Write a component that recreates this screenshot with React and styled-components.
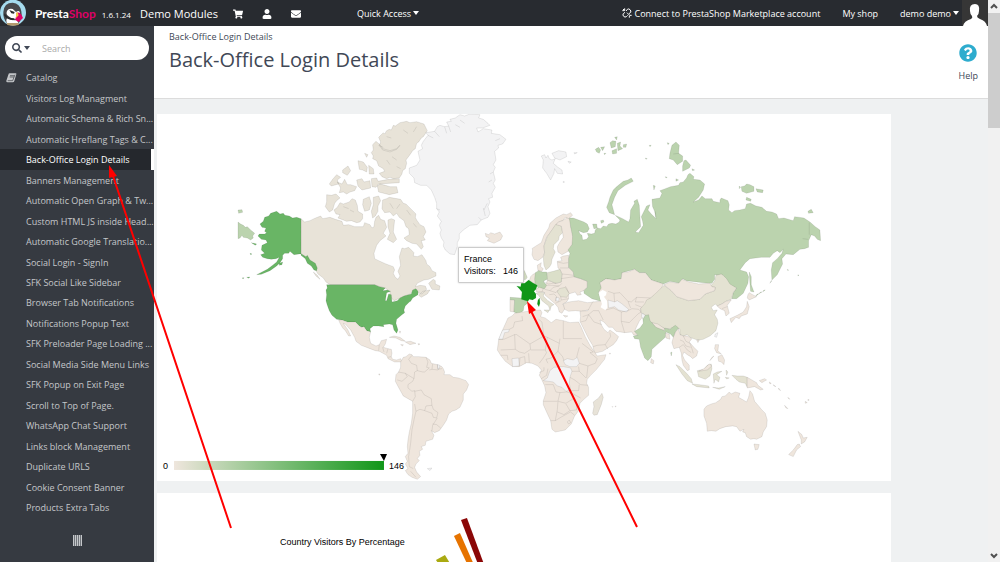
import styled, { createGlobalStyle } from "styled-components";
import {
  FaEnvelope,
  FaQuestionCircle,
  FaSearch,
  FaShoppingCart,
  FaUser,
} from "react-icons/fa";

const GlobalStyle = createGlobalStyle`
  * {
    box-sizing: border-box;
  }
  body {
    margin: 0;
    font-family: "Open Sans", sans-serif;
    font-size: 9px;
    color: #414856;
  }
  a {
    color: inherit;
    text-decoration: none;
  }
`;

const Window = styled.div`
  position: relative;
  display: flex;
  height: 100vh;
  overflow: hidden;
`;
const Page = styled.div`
  flex: 1;
  min-width: 0;
  display: flex;
  flex-direction: column;
`;

/* top bar */
const TopBar = styled.header`
  flex: none;
  display: flex;
  align-items: center;
  height: 26px;
  background: #282b30;
  color: #fff;
`;
const Brand = styled.a`
  display: flex;
  align-items: center;
  width: 140px;
  height: 26px;
`;
const BrandName = styled.span`
  margin-left: 8px;
  font-family: Lato, sans-serif;
  font-size: 12px;
  font-weight: 700;
`;
const Pink = styled.span`
  color: #df0067;
`;
const Version = styled.span`
  margin-left: 6px;
  padding-top: 3px;
  font-size: 8px;
  line-height: 11px;
`;
const ShopName = styled.a`
  width: 93px;
  font-size: 11px;
`;
const IconButton = styled.button`
  display: flex;
  width: 29px;
  padding: 2px 0 0;
  border: 0;
  background: none;
  color: #fff;
  font-size: 10px;
`;
const MenuButton = styled.button`
  display: flex;
  align-items: center;
  gap: 2px;
  padding: 0;
  border: 0;
  background: none;
  color: #fff;
  font: 9px "Open Sans", sans-serif;
`;
const Quick = styled.div`
  flex: 1;
  padding-left: 37px;
`;
const Account = styled.div`
  display: flex;
  align-items: center;
  gap: 22px;
`;
const TopLink = styled.a`
  display: flex;
  align-items: center;
  gap: 2px;
`;
const Avatar = styled.svg`
  width: 26px;
  height: 26px;
  margin-left: 3px;
  background: #363636;
`;

/* sidebar */
const Body = styled.div`
  flex: 1;
  min-height: 0;
  display: flex;
`;
const Sidebar = styled.nav`
  flex: none;
  width: 154px;
  padding-top: 10px;
  background: #363a41;
  color: #c5c7ca;
`;
const SearchBox = styled.form`
  display: flex;
  align-items: center;
  height: 24px;
  margin: 0 5px;
  padding-left: 7px;
  border-radius: 12px;
  background: #fff;
  color: #414856;
`;
const SearchType = styled.button`
  display: flex;
  align-items: center;
  gap: 2px;
  width: 30px;
  padding: 0;
  border: 0;
  background: none;
  color: #414856;
  font-size: 10px;
`;
const SearchInput = styled.input`
  width: 96px;
  padding: 0;
  border: 0;
  outline: 0;
  background: none;
  font: 9px "Open Sans", sans-serif;
  &::placeholder {
    color: #aaa;
    opacity: 1;
  }
`;
const Section = styled.a`
  display: flex;
  align-items: center;
  gap: 9px;
  height: 21px;
  margin-top: 7px;
  padding-left: 6px;
`;
const Menu = styled.ul`
  display: grid;
  grid-template-columns: 100%;
  grid-auto-rows: 1fr;
  height: 430px;
  margin: 0;
  padding: 0;
  list-style: none;
`;
const MenuItem = styled.li`
  display: flex;
  align-items: center;
  padding-left: 26px;
  ${(props) =>
    props.$active &&
    `
    background: #25282d;
    border-right: 3px solid #fff;
    color: #fff;
  `}
`;
const MenuLink = styled.a`
  white-space: nowrap;
`;
const Collapse = styled.button`
  display: block;
  width: 9px;
  height: 11px;
  margin: 17px auto 0;
  padding: 0;
  border: 0;
  background: repeating-linear-gradient(90deg, #c5c7ca 0 1px, #6f7379 1px 2px);
`;

/* content */
const Main = styled.main`
  flex: 1;
  min-width: 0;
  background: #eff1f2;
  overflow: hidden;
`;
const PageHead = styled.div`
  display: flex;
  justify-content: space-between;
  height: 73px;
  padding: 4px 10px 0 15px;
  border-bottom: 1px solid #dcdcdc;
  background: #fff;
`;
const Crumb = styled.div`
  line-height: 14px;
`;
const Title = styled.h1`
  margin: 2px 0 0;
  font-size: 20px;
  line-height: 28px;
  font-weight: 400;
`;
const Help = styled.a`
  display: flex;
  flex-direction: column;
  align-items: center;
  gap: 7px;
  padding-top: 14px;
  svg {
    width: 18px;
    height: 18px;
    color: #2eacce;
  }
`;
const Card = styled.section`
  position: relative;
  width: 88%;
  margin: 15px 0 0 3px;
  background: #fff;
  & + & {
    margin-top: 12px;
  }
`;
const Chart = styled.svg`
  display: block;
  width: 100%;
  font: 9px "Liberation Sans", Arial, sans-serif;
`;
const Tip = styled.div`
  position: absolute;
  left: 301px;
  top: 133px;
  width: 66px;
  padding: 5px;
  border: 1px solid #ccc;
  border-radius: 1px;
  background: #fff;
  box-shadow: 0 0 2px rgba(0, 0, 0, 0.2);
  color: #000;
  font: 9px/12px "Liberation Sans", Arial, sans-serif;
`;
const TipRow = styled.div`
  display: flex;
  justify-content: space-between;
`;
const Rail = styled.div`
  flex: none;
  display: flex;
  flex-direction: column;
  align-items: center;
  justify-content: space-between;
  width: 12px;
  background: #f1f1f1;
`;
const RailTop = styled.div`
  width: 100%;
`;
const Thumb = styled.div`
  height: 115px;
  background: #cdcdcd;
`;
const RailArrow = styled.svg`
  display: block;
  width: 12px;
  height: 13px;
`;
const Arrows = styled.svg`
  position: absolute;
  inset: 0;
  width: 100%;
  height: 100%;
  pointer-events: none;
`;

const items = [
  "Visitors Log Managment",
  "Automatic Schema & Rich Sn...",
  "Automatic Hreflang Tags & C...",
  "Back-Office Login Details",
  "Banners Management",
  "Automatic Open Graph & Tw...",
  "Custom HTML JS inside Head...",
  "Automatic Google Translatio...",
  "Social Login - SignIn",
  "SFK Social Like Sidebar",
  "Browser Tab Notifications",
  "Notifications Popup Text",
  "SFK Preloader Page Loading ...",
  "Social Media Side Menu Links",
  "SFK Popup on Exit Page",
  "Scroll to Top of Page.",
  "WhatsApp Chat Support",
  "Links block Management",
  "Duplicate URLS",
  "Cookie Consent Banner",
  "Products Extra Tabs",
];

const PINK = "#efe6dd";
const SAND = "#e8e3d8";
const OLIVE = "#e4e2d2";
const GREY = "#f3f3f4";
const PALE = "#bbd3ae";
const MID = "#69b565";
const DARK = "#109618";

// each region: origin on the map plus shapes drawn at three units per pixel
const regions = [
  {
    at: [230, 110],
    shapes: [
      [PALE, "M24 336L32 342 40 346 46 352 52 350 62 360 74 370 68 378 70 384 62 390 52 384 40 382 36 376 30 384 24 386ZM24 300L36 299 38 307 26 310Z"],
      [SAND, "M446 82L460 68 464 72 470 62 478 58 484 60 490 46 496 48 510 38 530 34 540 38 560 35 582 42 592 62 580 80 574 84 566 96 560 100 556 116 548 122 540 134 528 150 530 160 526 176 518 182 516 192 508 204 490 206 480 202 470 206 456 200 448 190 464 184 460 176 446 168 440 152 428 146 430 138 424 128 430 120 428 104 438 94 450 104 458 116 480 122 500 116 510 106 500 118 480 126 458 120 448 106 452 96Z"],
      [SAND, "M442 228L450 222 466 226 480 230 500 230 504 248 478 254 446 246ZM424 206L440 204 444 214 476 208 508 206 508 218 446 222 438 232 426 230Z"],
      [SAND, "M298 222L308 208 320 194 332 202 322 210 326 222 304 228ZM338 180L354 168 362 182 352 196 338 188ZM322 216L336 222 344 208 352 224 362 224 380 230 374 242 360 246 350 252 340 246 328 248 332 234ZM384 152L400 156 412 172 410 186 398 180 388 178ZM416 166L430 176 432 192 418 192ZM380 210L396 206 402 216 420 212 422 234 396 240 384 228ZM404 130L414 134 410 142Z"],
      [SAND, "M290 254L304 256 318 252 330 264 320 272 314 280 308 300 298 306 286 290 290 276ZM312 300L322 292 330 278 340 282 358 276 366 266 376 270 382 286 384 304 398 312 398 326 390 336 380 338 364 332 350 334 324 324 330 314 318 312ZM400 268L418 260 424 280 418 300 404 304 398 284ZM430 262L446 258 452 272 444 288 444 304 436 318 428 324 424 304 430 284Z"],
      [SAND, "M458 270L470 266 478 262 512 268 520 280 528 282 536 290 548 302 558 312 556 322 560 330 570 344 582 350 588 366 580 380 586 390 574 392 580 410 574 418 560 402 546 400 530 392 522 384 538 374 536 356 528 350 522 332 508 322 500 310 490 318 480 306 464 308 456 296ZM474 330L484 326 494 330 490 366 500 388 490 398 472 388 480 370 474 350Z"],
      [SAND, "M213 326L224 336 240 332 252 326 262 322 272 318 278 326 300 322 316 328 336 334 340 346 356 344 374 350 400 350 404 338 420 344 426 354 432 350 434 334 438 322 446 316 452 328 464 332 470 352 460 370 468 378 450 392 440 406 432 430 434 446 446 452 468 462 490 470 494 480 490 490 496 502 504 508 510 498 504 484 512 466 508 440 516 414 524 416 536 412 552 428 550 438 562 440 576 434 588 452 590 462 600 470 606 482 618 488 618 498 596 508 582 510 562 520 556 530 570 526 586 528 590 538 576 552 562 548 556 536 540 552 506 566 492 572 480 560 480 546 466 534 448 530 432 524 300 524 288 516 280 504 264 492 258 482 240 454 213 430ZM596 520L610 508 616 512 616 522 630 528 628 540 606 538ZM566 556L578 544 600 540 592 552 574 562ZM250 486L262 496 270 508 258 498Z"],
      [MID, "M213 326L200 322 188 324 178 318 165 316 160 310 150 312 140 304 122 310 116 318 104 322 100 334 90 342 96 352 108 354 104 364 110 368 104 372 88 372 84 378 94 388 108 390 112 398 96 406 94 420 104 430 92 434 98 442 112 446 124 448 138 446 148 442 140 456 130 464 112 478 96 486 80 494 94 493 120 482 140 468 150 458 158 446 158 436 164 430 176 430 180 424 192 434 213 431 228 440 232 436 240 450 256 460 262 474 260 482 252 480 244 468 232 460 226 446 213 436ZM148 460L158 456 156 464 148 466ZM64 398L80 402 76 406ZM60 430L66 432 62 434ZM36 504L42 503 40 506ZM50 502L60 501 56 505Z"],
    ],
    lines: "M520 60L534 70M560 50L550 66M470 80L484 84M446 106L460 112M486 140L500 150M470 150L480 164M500 170L512 176M340 290L356 296M360 300L372 306M480 280L490 296M510 282L500 296M530 300L542 316M550 340L560 352",
  },
  {
    at: [320, 280],
    shapes: [
      [MID, "M20 14L164 14 178 20 196 24 188 32 202 30 212 34 200 38 196 62 200 62 206 42 214 44 216 66 232 62 240 54 252 48 274 42 278 30 288 26 294 34 294 44 278 54 272 64 268 66 256 78 252 90 254 98 244 106 230 118 228 130 234 150 230 160 222 150 218 134 208 132 190 134 192 140 176 138 160 138 150 146 152 156 140 152 132 140 124 142 118 138 106 126 82 126 66 120 50 118 36 106 28 92 22 76 18 62 20 44 18 30 22 24Z"],
      [PINK, "M56 120L66 120 82 126 106 126 118 138 124 142 132 140 140 152 152 156 148 172 152 190 168 198 178 194 184 182 200 178 196 192 190 202 204 206 214 208 216 220 214 230 218 238 230 240 242 236 246 246 236 246 224 246 204 236 200 226 178 214 166 212 150 206 124 196 108 184 104 172 92 150 76 132 70 130 84 150 92 168 86 168 76 152 68 144 60 130Z"],
      [PINK, "M208 172L222 168 240 172 256 184 244 182 228 174ZM256 186L272 184 288 190 270 194ZM242 194L250 194 248 198ZM294 191L300 192 296 195ZM238 154L240 160 242 154Z"],
      [PINK, "M242 246L250 232 258 230 268 222 276 224 280 230 296 230 318 232 330 240 334 250 352 254 366 260 370 266 374 276 372 284 390 284 400 292 416 294 438 302 446 314 440 330 430 342 430 360 420 382 408 390 396 394 386 402 380 420 370 436 358 452 344 458 334 452 342 466 338 478 318 484 316 496 304 500 308 508 298 514 300 526 292 536 298 542 288 552 284 562 290 576 302 590 292 598 276 592 264 584 256 572 264 566 256 552 262 544 256 530 264 520 262 500 264 480 268 456 274 430 278 400 278 364 264 356 250 348 240 330 226 304 228 284 236 276 242 262Z"],
      [GREY, "M352 254L360 256 358 266 354 268ZM322 566L336 564 330 572Z"],
      [PINK, "M176 282L180 282 178 286Z"],
    ],
    lines: "M276 226L266 238 274 250 290 256 292 272 284 276 282 296 278 304 264 314 264 324 276 334 284 332 286 350 278 364M234 276L256 280 262 290 246 304 232 300M256 280L282 296M284 334L304 330 312 344 334 356 336 376 318 378 314 392 300 388 288 394 284 372M336 376L340 388 354 398 350 414 340 412 336 400 314 392M288 394L282 420 276 450 272 490 266 530 268 560 280 566M352 414L338 436 336 452M338 432L350 434 362 444M318 232L324 246 320 262 328 264 314 276 308 276 292 272M338 252L336 268 328 270M352 254L354 268 366 266M336 268L354 270M178 194L176 212M188 202L192 216M204 206L200 220M214 230L204 232M272 574L288 592",
  },
  {
    at: [400, 110],
    shapes: [
      [GREY, "M112 50L120 46 134 50 146 48 140 36 154 34 150 28 166 24 180 14 194 18 210 12 240 14 236 24 250 28 264 40 270 46 248 54 230 54 234 66 250 56 276 60 274 70 300 74 318 88 308 102 294 106 296 114 284 124 288 150 280 164 286 172 280 186 286 210 280 220 286 232 276 250 278 262 266 266 270 276 264 290 270 310 264 322 244 330 232 344 210 346 190 360 178 372 178 386 172 398 172 410 164 434 150 432 136 420 130 408 132 396 124 384 120 370 124 360 118 346 124 334 112 318 118 306 110 296 110 280 104 262 94 240 80 226 62 226 44 218 42 204 28 190 28 174 50 166 60 150 54 124 68 116 64 106 70 94 84 76 78 68 104 64Z"],
      [GREY, "M424 138L434 134 438 144 444 136 448 146 456 150 466 146 460 160 474 172 486 180 488 192 472 190 464 176 462 190 452 210 440 190 428 174 430 150ZM456 130L476 122 498 126 500 140 480 150 464 144ZM504 154L514 156 508 160ZM522 128L532 128 524 132ZM490 214L494 216 490 218Z"],
      [PINK, "M256 370L266 374 272 368 284 372 300 366 308 378 302 390 282 400 262 392 268 384 258 380Z"],
    ],
    lines: "M84 76L100 84M104 64L118 80M134 50L140 70M146 48L152 66M166 44L180 52M180 30L194 40M300 86L286 92M280 186L270 192M276 210L266 216M262 280L252 300M244 330L236 322M110 296L120 300M250 294L256 318",
  },
  {
    at: [500, 200],
    shapes: [
      [PINK, "M98 150L96 146 108 138 124 128 132 106 146 84 150 70 168 54 190 42 200 44 212 38 218 46 206 56 196 52 188 62 176 66 164 80 154 94 140 112 132 138 134 158 128 172 114 182 102 178 96 164Z"],
      [OLIVE, "M134 158L132 138 142 110 156 90 168 72 184 78 188 98 178 108 176 120 162 134 160 146 166 156 156 178 154 192 148 202 138 210 132 196 130 172Z"],
      [PINK, "M168 74L176 66 188 62 200 54 212 58 212 80 218 94 218 110 222 124 208 152 186 164 174 156 172 140 180 126 190 112 188 98 184 78Z"],
      [PINK, "M112 196L124 188 122 200 130 206 126 214 114 212ZM88 242L92 230 100 222 108 220 106 254 98 248Z"],
      ["#d3dcc2", "M66 200L74 214 82 232 78 238 66 240 50 246 56 236 60 222Z"],
      [PINK, "M140 248L142 240 168 250 184 246 186 222 180 208 174 204 172 184 186 182 182 172 190 168 206 166 206 202 220 216 222 230 242 236 262 244 262 262 252 272 240 276 244 284 232 286 226 276 206 282 206 296 200 306 188 312 196 324 186 340 178 336 174 322 166 312 150 298 136 286 132 276 118 276 112 266 116 264 130 262ZM190 346L204 348 196 352Z"],
      [PALE, "M106 218L116 212 128 216 140 216 144 236 130 244 140 256 134 266 116 264 106 256 104 238Z"],
      ["#dbdfc9", "M142 218L160 214 180 208 186 222 184 246 168 250 142 240Z"],
      [OLIVE, "M178 266L196 262 208 280 200 292 182 290 172 276Z"],
      [GREY, "M168 292L178 294 176 304 168 302Z"],
      [PINK, "M108 268L118 262 130 266 126 276 110 276Z"],
      [OLIVE, "M108 280L120 276 134 278 130 288 144 302 162 314 154 318 150 332 146 318 126 302 118 288ZM132 330L148 330 144 338Z"],
      [PINK, "M30 296L44 300 42 336 30 334Z"],
      [PALE, "M30 292L62 294 84 304 84 308 72 318 70 332 56 342 42 336 44 300 32 300Z"],
      [DARK, "M50 258L62 260 64 250 74 250 86 240 98 248 112 256 108 268 102 274 108 282 108 294 98 300 88 298 84 304 64 298 66 276 58 266ZM114 300L119 294 120 310 117 320 112 312Z"],
      [PINK, "M190 312L206 306 236 302 262 308 282 306 290 326 264 330 244 334 226 332 206 334 194 328Z"],
    ],
    lines: "M172 186L190 190 204 188M180 204L206 204M186 222L206 224 220 226M184 236L222 230M130 244L146 252 158 250 168 250M140 256L156 256 178 258 186 250M134 268L150 272 160 262 178 258M150 272L168 278 174 270M148 284L162 282 170 290 166 304M182 290L184 300 206 296M166 310L184 302M206 278L200 264 196 258",
  },
  {
    at: [580, 110],
    shapes: [
      [PALE, "M-32 324L-20 324 -4 330 12 336 22 342 28 356 22 366 10 368 -4 362 0 372 6 376 8 390 20 388 26 380 22 370 34 372 44 370 46 360 52 354 62 356 70 348 80 350 86 342 96 340 108 342 118 336 120 330 106 316 128 326 146 336 150 326 152 300 164 280 162 274 172 268 178 286 180 320 182 350 166 366 176 368 190 346 188 334 184 320 194 300 200 288 210 284 204 300 214 312 224 322 228 326 224 304 218 290 216 268 240 264 246 250 240 242 256 236 272 230 296 226 300 218 310 216 320 204 324 194 330 190 342 200 340 208 360 210 374 222 370 240 356 262 340 276 356 270 366 258 376 266 396 266 400 274 420 278 420 270 424 264 444 272 448 284 446 300 456 308 464 302 480 300 496 296 500 282 512 280 528 288 546 292 560 304 576 306 590 312 596 326 612 324 640 332 644 320 672 324 690 336 706 350 720 360 722 392 712 388 704 378 694 374 686 392 686 412 674 416 660 418 640 434 618 432 606 446 608 462 600 478 592 494 576 510 574 480 578 458 592 446 606 430 610 418 600 428 592 422 580 430 570 442 544 442 510 446 496 458 480 480 500 486 506 500 504 520 490 550 470 566 456 566 460 548 470 534 446 524 434 506 430 496 404 494 404 508 396 520 386 520 350 516 320 512 308 506 300 520 270 514 250 522 214 510 196 488 178 488 164 478 126 488 124 506 104 510 78 506 60 518 66 536 56 548 62 574 36 566 12 550 12 542 22 532 22 514 2 506 -18 500 -20 486 -34 472 -34 446 -30 430 -36 420 -24 404 -22 380 -28 350Z"],
      [PALE, "M80 292L86 276 90 262 100 240 108 232 130 214 144 210 154 204 160 214 136 226 114 242 104 262 96 284 104 314 88 308ZM38 342L50 342 52 354 42 356ZM62 332L70 330 72 336 64 340ZM270 130L276 106 288 96 298 106 296 130 308 138 308 154 292 164 280 150 268 146ZM308 168L312 152 318 150 332 166 328 174 308 184ZM336 176L344 180 338 182ZM262 98L268 100 264 104Z"],
      [PALE, "M46 118L56 112 62 120 58 130 50 126ZM62 112L74 110 68 122ZM90 98L98 92 108 94 106 110 94 114ZM96 122L110 116 110 130 98 132ZM112 100L122 96 120 108 128 116 114 122ZM130 104L140 102 138 112 130 112ZM104 82L112 80 110 90ZM72 130L78 130 74 134ZM208 106L214 106 210 110ZM196 144L202 146 198 148ZM220 226L226 228 222 240ZM256 200L262 202 258 204ZM288 206L296 210 288 214Z"],
      [PALE, "M484 230L494 228 500 222 510 224 522 230 522 244 500 250 486 244ZM528 236L550 240 548 248 532 246ZM500 262L514 268 512 274 498 270ZM478 228L482 232 478 236ZM684 304L694 298 700 308 686 310ZM508 486L514 500 514 524 522 546 512 544 510 520ZM556 540L548 546 552 540ZM546 546L536 552 542 546ZM536 552L526 560 532 552ZM576 512L570 520 574 512ZM622 478L626 480 624 482ZM654 494L657 496 654 498Z"],
    ],
    lines: "M688 338L688 374M668 386L684 388M226 304L228 322M280 132L298 130",
  },
  {
    at: [480, 290],
    shapes: [
      [PINK, "M338 36L362 34 368 20 356 6 364 -6 360 -22 378 -34 404 -30 424 -34 426 -52 444 -54 464 -62 478 -52 496 -52 514 -30 550 -18 540 6 512 24 496 50 482 56 484 68 490 78 478 94 470 110 464 124 474 138 460 134 456 126 434 128 408 124 398 112 386 112 372 96 360 90 364 104 372 118 384 128 390 120 404 130 416 140 410 152 400 164 368 184 344 190 338 166 326 146 312 118 300 94 302 80 300 64 324 62Z"],
      ["#fff", "M360 20L356 8 368 0 380 6 378 16 372 20 382 34 382 54 376 60 362 52 366 42Z"],
      [GREY, "M384 30L404 36 412 32 424 40 446 58 440 66 416 60 404 50 386 54Z"],
      [PINK, "M84 84L96 78 104 70 128 66 160 62 182 60 186 68 182 80 196 84 214 98 228 88 250 92 270 98 296 96 304 112 316 140 330 166 342 184 352 198 378 194 374 208 350 238 332 256 322 268 320 280 326 292 326 316 312 328 300 340 296 362 284 378 274 402 256 420 238 424 226 426 216 418 212 392 198 362 190 344 190 332 198 308 194 288 184 266 178 256 184 240 174 228 156 220 140 218 118 230 98 230 76 214 62 196 52 180 56 150 68 120Z"],
      [GREY, "M56 148L68 120 88 118 86 126 74 128 68 148ZM96 206L116 204 118 228 98 230ZM250 212L262 206 280 210 292 202 298 220 290 230 270 230 256 224ZM190 272L202 264 210 242 222 232 250 230 272 234 276 244 270 262 268 280 272 300 258 304 246 292 232 288 220 276Z"],
      [SAND, "M338 370L342 350 340 336 356 324 366 310 370 322 364 344 352 374 342 376Z"],
      [PINK, "M388 190L392 190 390 193ZM396 350L399 350 398 352ZM406 348L409 349 406 351Z"],
    ],
    lines: "M88 118L100 112 104 96 128 92 126 78M104 134L110 134 150 162 192 138 186 96 176 88M56 148L72 148 104 134 106 178 62 180M150 162L152 178 134 190 118 186 106 178M192 138L202 142 238 160 240 146M250 92L250 146 306 146M152 180L196 180 202 142M196 180L200 188 190 204 178 220M238 160L234 184 248 200 252 212M234 184L214 204 198 208 204 220M298 172L290 202M306 160L340 186 330 188 352 206 346 220 324 228 298 220M324 228L320 264M296 230L298 244 318 264M276 244L298 244M270 262L284 270 302 284 324 286M298 284L296 302 272 302M196 284L220 284 228 306 240 308 234 334 190 334M240 308L260 306 280 312 302 324M234 334L258 340 280 326M234 336L232 360 226 392 212 392M232 366L252 374 270 362 258 342M270 362L290 360 290 340M226 392L246 380 272 366 284 376M262 396L268 390 272 398 266 402 262 396M62 196L82 196 84 210M118 204L134 200 136 220M146 190L148 218M120 204L118 228M178 248L192 242 192 232M184 266L200 256 204 236M308 80L326 74 342 96 366 104M326 74L340 62 356 62 370 90M302 96L318 92 326 74M340 170L352 166 376 164 392 140M376 164L384 178M392 140L390 128M378 60L400 54 424 66 424 94 434 128M424 94L448 98 462 84 474 72 484 66M424 66L444 62 456 56 476 58 484 66M384 4L402 10 420 8 444 34 454 36 470 22 512 24M402 10L404 36M444 34L452 54M470 22L466 36 492 36M466 44L486 52",
  },
  {
    at: [630, 260],
    shapes: [
      [OLIVE, "M102 76L124 92 140 110 176 122 210 118 226 102 254 92 256 82 240 80 254 64 258 46 274 42 282 48 290 56 300 72 320 84 310 98 304 118 288 124 276 132 262 138 256 132 244 142 250 152 262 150 254 164 262 178 264 190 258 212 240 228 220 238 208 240 196 238 180 232 172 224 160 228 150 224 150 208 134 200 120 206 104 206 78 194 64 188 50 168 34 158 32 146 44 132 50 120 62 114 86 92Z"],
      [PINK, "M102 74L120 66 146 70 156 58 178 66 206 72 240 70 246 80 256 82 254 92 226 102 210 118 176 122 140 110 124 92Z"],
      [PINK, "M66 188L84 192 104 206 102 212 80 206ZM130 232L136 216 146 206 150 224 160 228 172 228 186 236 178 246 192 262 204 274 200 288 188 296 182 290 172 284 162 276 158 286 164 300 178 316 178 330 172 332 160 316 156 300 154 280 148 262 132 266 126 248Z"],
      [PALE, "M10 228L24 226 14 214 30 204 40 190 38 168 56 164 60 182 78 202 104 212 104 204 120 208 136 196 146 204 136 216 130 232 122 222 108 216 106 232 86 250 66 268 64 290 54 302 44 294 32 262 28 238 14 236ZM122 278L126 276 124 288Z"],
      [PINK, "M106 220L118 222 120 238 108 234ZM64 296L72 302 70 312 62 308ZM262 138L276 132 288 124 304 120 292 136 298 160 288 168 284 152 270 146ZM354 104L358 98 368 104 380 110 358 120 352 114ZM352 124L358 140 352 162 334 168 328 176 318 172 304 188 300 176 322 166 340 156 350 140Z"],
      [GREY, "M256 222L264 218 260 232 254 230ZM36 160L46 166 40 176 34 170Z"],
      [PINK, "M256 254L266 254 264 272 274 282 260 278 254 266ZM264 290L276 284 284 300 282 314 274 306 266 304ZM252 288L240 302 246 292ZM200 240L208 240 204 248Z"],
      [OLIVE, "M138 314L150 320 170 340 184 356 188 370 172 362 156 342ZM186 372L208 374 236 378 238 384 200 380ZM202 332L222 328 232 316 244 312 246 326 240 348 226 358 206 350ZM250 342L262 336 276 334 260 344 270 352 266 366 256 358 252 370ZM288 330L294 336 290 346ZM286 352L298 354 290 357ZM248 382L266 384 286 380 268 388ZM306 346L322 348 340 348 352 352 352 382 346 370 328 366 318 358Z"],
      [PINK, "M352 352L366 360 380 368 384 376 400 388 392 390 374 380 352 384ZM206 334L222 326 238 312 246 318 232 330ZM388 362L404 356 410 360 396 368ZM418 366L424 370 420 372ZM430 374L438 380 432 378ZM446 384L452 392 446 388ZM474 412L480 418 476 416ZM464 436L474 446 468 444ZM526 424L532 428 526 430ZM534 418L538 420 534 422Z"],
      [PINK, "M222 448L230 438 244 432 258 428 272 418 276 410 286 408 298 396 304 402 316 396 330 400 326 412 340 420 350 426 356 412 360 392 368 402 374 424 388 440 394 448 406 460 412 480 410 500 400 516 396 530 380 538 372 536 362 538 350 530 346 518 338 516 342 508 330 514 320 500 308 498 288 500 270 506 258 514 244 512 232 514 230 490 222 468ZM372 552L388 554 384 568 376 570ZM504 514L516 524 520 534 532 532 524 546 514 552 514 540ZM508 552L512 560 500 570 490 590 476 584 490 570 502 554Z"],
    ],
    lines: "M160 228L168 244 180 250 186 266 190 280M150 240L160 244 168 258 182 262M148 262L160 254 172 270 184 278M276 146L292 140",
  },
];

const Region = ({ at, shapes, lines }) => (
  <g transform={`translate(${at[0]} ${at[1]}) scale(${1 / 3})`} strokeWidth="2" strokeLinejoin="round">
    {shapes.map(([fill, d], i) => (
      <path key={i} d={d} fill={fill} stroke={fill === "#fff" || fill === DARK ? fill : "#000"} strokeOpacity=".13" />
    ))}
    <path d={lines} fill="none" stroke="#000" strokeOpacity=".13" />
  </g>
);

const Puffin = () => (
  <svg width="27" height="26" viewBox="0 0 81 78">
    <circle cx="39" cy="38" r="39" fill="#a5dbee" />
    <path d="M10 36Q12 8 38 8 60 10 64 34L66 54 54 72 22 72Q8 54 10 36Z" fill="#47484b" />
    <path d="M20 36Q24 24 38 27L48 36Q60 28 60 42L46 58Q34 56 28 50 18 46 20 36Z" fill="#fff" />
    <path d="M22 54Q34 62 50 60L56 70 22 71Q16 62 22 54Z" fill="#fff" />
    <path d="M28 30L44 36 42 41 34 40Z" fill="#28292b" />
    <path d="M50 38Q62 34 69 54L56 66 46 60Z" fill="#df0067" />
    <path d="M48 38L53 37 56 46 48 54Z" fill="#f5c14b" />
    <path d="M14 40Q22 56 44 55L40 61Q20 60 12 46Z" fill="#28292b" />
    <path d="M20 69H56V75Q38 80 22 75Z" fill="#b59a6d" />
  </svg>
);

const Caret = () => (
  <svg width="6" height="4" viewBox="0 0 6 4">
    <path d="M0 0H6L3 4Z" fill="currentColor" />
  </svg>
);

const Book = () => (
  <svg width="11" height="10" viewBox="0 0 33 30">
    <path d="M11 1H29Q32 1 31 4L25 24Q24 28 20 28H5Q0 28 1 23L7 5Q8 1 11 1Z" fill="currentColor" />
    <path d="M12 8H25M11 12H24M5 23H20L27 5" fill="none" stroke="#363a41" strokeWidth="2" />
  </svg>
);

const BrokenLink = () => (
  <svg width="10" height="10" viewBox="0 0 30 30" fill="none" stroke="currentColor" strokeWidth="3">
    <path d="M12 9L16 4Q20 1 24 5T26 13L21 17M9 13L4 17Q1 21 5 25T13 26L17 22" />
    <path d="M15 14L23 22M8 1V7M1 8H7M3 3L8 8M22 23V29M23 22H29" />
  </svg>
);

const App = () => {
  return (
    <Window>
      <GlobalStyle />
      <Page>
        <TopBar>
          <Brand href="#">
            <Puffin />
            <BrandName>
              Presta<Pink>Shop</Pink>
            </BrandName>
            <Version>1.6.1.24</Version>
          </Brand>
          <ShopName href="#">Demo Modules</ShopName>
          <IconButton aria-label="Orders"><FaShoppingCart /></IconButton>
          <IconButton aria-label="Customers"><FaUser /></IconButton>
          <IconButton aria-label="Messages"><FaEnvelope /></IconButton>
          <Quick>
            <MenuButton>Quick Access<Caret /></MenuButton>
          </Quick>
          <Account>
            <TopLink href="#"><BrokenLink />Connect to PrestaShop Marketplace account</TopLink>
            <TopLink href="#">My shop</TopLink>
            <MenuButton>
              demo demo
              <Caret />
            </MenuButton>
          </Account>
          <Avatar viewBox="0 0 26 26">
            <path d="M1 26Q2 21 9 19 11 18 10 16 8 14 8 11 7 4 13 4 18 4 17 11 17 14 15 16 15 18 18 19 24 21 25 26Z" fill="#fff" />
          </Avatar>
        </TopBar>
        <Body>
          <Sidebar>
            <SearchBox>
              <SearchType type="button" aria-label="Search in"><FaSearch /><Caret /></SearchType>
              <SearchInput placeholder="Search" aria-label="Search" />
            </SearchBox>
            <Section href="#"><Book />Catalog</Section>
            <Menu>
              {items.map((item) => (
                <MenuItem key={item} $active={item === "Back-Office Login Details"}>
                  <MenuLink href="#">{item}</MenuLink>
                </MenuItem>
              ))}
            </Menu>
            <Collapse aria-label="Collapse menu" />
          </Sidebar>
          <Main>
            <PageHead>
              <div>
                <Crumb>Back-Office Login Details</Crumb>
                <Title>Back-Office Login Details</Title>
              </div>
              <Help href="#"><FaQuestionCircle />Help</Help>
            </PageHead>
            <Card>
              <Chart viewBox="157 114 734 367">
                <defs>
                  <linearGradient id="scale">
                    <stop offset="0" stopColor={PINK} />
                    <stop offset="1" stopColor={DARK} />
                  </linearGradient>
                </defs>
                {regions.map((region) => (
                  <Region key={region.at.join()} {...region} />
                ))}
                <rect x="174" y="461" width="210" height="9" fill="url(#scale)" />
                <path d="M380 454H387L384 461Z" />
                <text x="163" y="469">0</text>
                <text x="389" y="469">146</text>
              </Chart>
              <Tip>
                France
                <TipRow><span>Visitors:</span><span>146</span></TipRow>
              </Tip>
            </Card>
            <Card>
              <Chart viewBox="157 493 734 367">
                <text x="280" y="545">Country Visitors By Percentage</text>
                <path d="M461 520L467 518 512 640 508 642Z" fill="#8b0707" />
                <path d="M454 536L460 533 508 642 505 644Z" fill="#e67300" />
                <path d="M436 560L445 555 500 646 496 648Z" fill="#aaaa11" />
              </Chart>
            </Card>
          </Main>
        </Body>
      </Page>
      <Rail>
        <RailTop>
          <RailArrow viewBox="0 0 12 13"><path d="M3 8L6 5 9 8" fill="none" stroke="#505050" strokeWidth="2" /></RailArrow>
          <Thumb />
        </RailTop>
        <RailArrow viewBox="0 0 12 13"><path d="M3 5L6 8 9 5" fill="none" stroke="#505050" strokeWidth="2" /></RailArrow>
      </Rail>
      <Arrows>
        <path d="M231 528L113 176M637 527L531 311" stroke="#f00" strokeWidth="2" fill="none" />
        <path d="M109 165L117 176 109 178ZM527 301L536 310 529 314Z" fill="#f00" />
      </Arrows>
    </Window>
  );
};

export default App;
